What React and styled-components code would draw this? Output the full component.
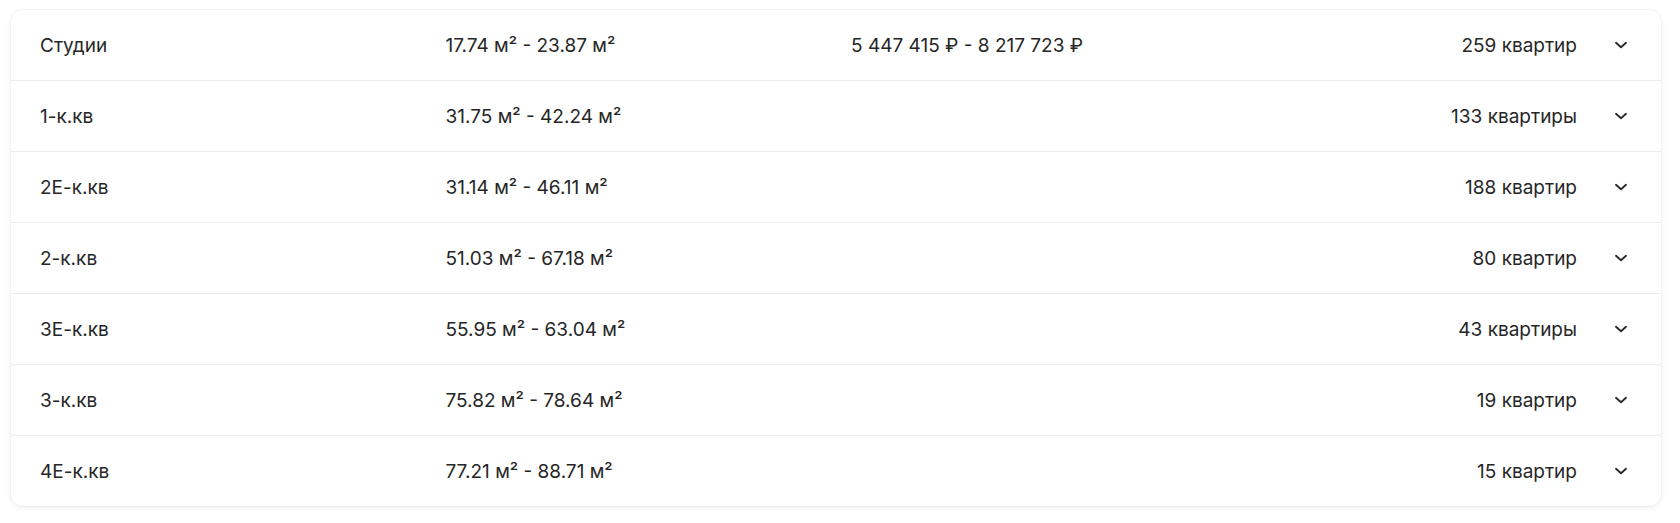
import React from "react";
import styled, { createGlobalStyle } from "styled-components";

const Global = createGlobalStyle`
  html, body { margin: 0; padding: 0; background: #ffffff; }
  body {
    font-family: Inter, "Noto Sans", "DejaVu Sans", sans-serif;
    color: #222222;
    -webkit-font-smoothing: antialiased;
  }
`;

const Page = styled.div`
  padding: 10px 19px 15px 11px;
`;

const Card = styled.div`
  background: #ffffff;
  border-radius: 12px;
  box-shadow: 0 0 0 1px rgba(0, 0, 0, 0.03), 0 2px 7px rgba(0, 0, 0, 0.06);
  overflow: hidden;
`;

const Row = styled.div`
  display: grid;
  grid-template-columns: 405.5px 405.5px 1fr auto 20px;
  align-items: center;
  height: 70px;
  padding: 0 30px 0 29px;
  border-top: ${(p) => (p.$first ? "none" : "1px solid #ebebeb")};
  font-size: 19px;
  letter-spacing: 0;
  color: #262626;
`;

const Cell = styled.div`
  white-space: nowrap;
`;

const Count = styled.div`
  white-space: nowrap;
  text-align: right;
  margin-right: 34px;
`;

const Chevron = styled.svg`
  width: 20px;
  height: 20px;
  display: block;
`;

const rows = [
  { name: "Студии", area: "17.74 м² - 23.87 м²", price: "5 447 415 ₽ - 8 217 723 ₽", count: "259 квартир" },
  { name: "1-к.кв", area: "31.75 м² - 42.24 м²", price: "", count: "133 квартиры" },
  { name: "2Е-к.кв", area: "31.14 м² - 46.11 м²", price: "", count: "188 квартир" },
  { name: "2-к.кв", area: "51.03 м² - 67.18 м²", price: "", count: "80 квартир" },
  { name: "3Е-к.кв", area: "55.95 м² - 63.04 м²", price: "", count: "43 квартиры" },
  { name: "3-к.кв", area: "75.82 м² - 78.64 м²", price: "", count: "19 квартир" },
  { name: "4Е-к.кв", area: "77.21 м² - 88.71 м²", price: "", count: "15 квартир" },
];

export default function App() {
  return (
    <>
      <Global />
      <Page>
        <Card>
          {rows.map((r, i) => (
            <Row key={r.name} $first={i === 0}>
              <Cell>{r.name}</Cell>
              <Cell>{r.area}</Cell>
              <Cell>{r.price}</Cell>
              <Count>{r.count}</Count>
              <Chevron viewBox="0 0 20 20" fill="none">
                <path
                  d="M5 7.8 L10 12.2 L15 7.8"
                  stroke="#2a2a2a"
                  strokeWidth="1.9"
                  strokeLinecap="round"
                  strokeLinejoin="round"
                />
              </Chevron>
            </Row>
          ))}
        </Card>
      </Page>
    </>
  );
}
